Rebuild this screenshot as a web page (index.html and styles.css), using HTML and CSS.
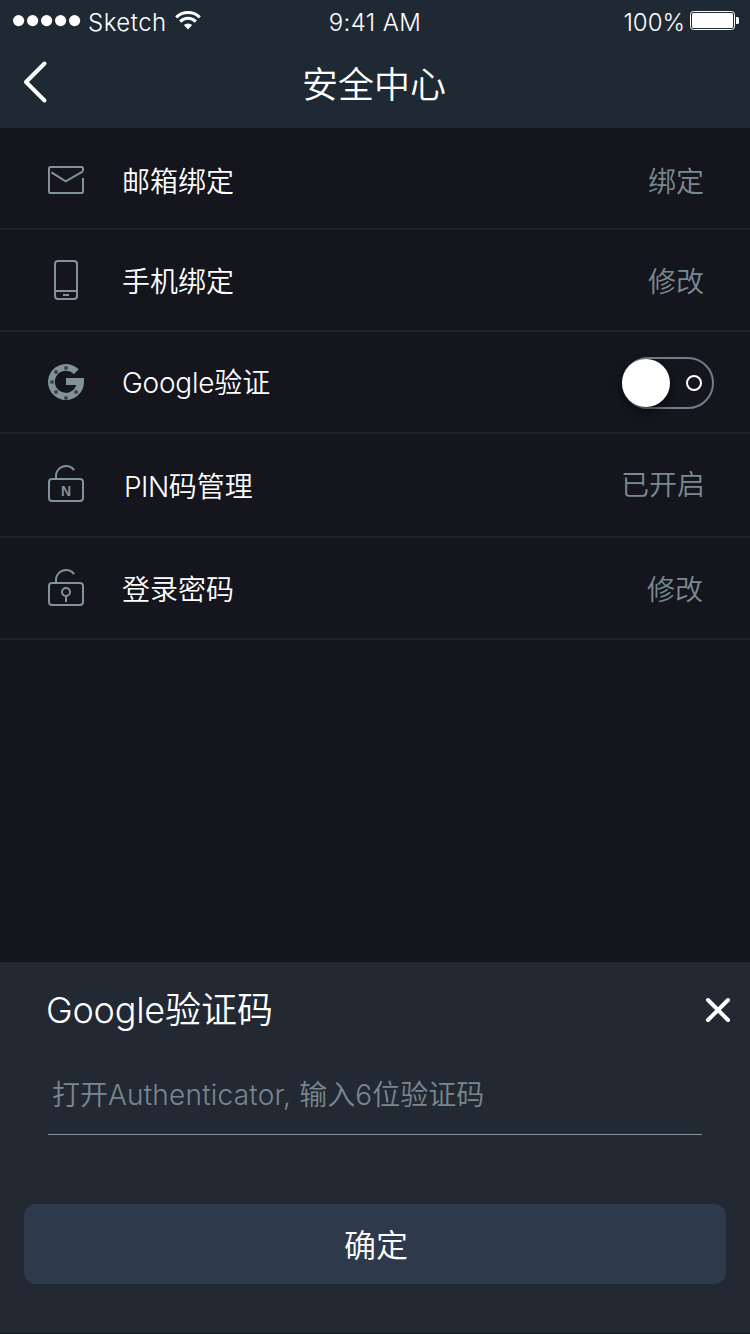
FILE: index.html
```html
<!DOCTYPE html>
<html lang="zh-CN">
<head>
<meta charset="utf-8">
<title>安全中心</title>
<link rel="stylesheet" href="styles.css">
</head>
<body>
<div class="screen">
  <header class="header">
    <div class="status">
      <div class="status-left">
        <svg class="dots" width="68" height="12" viewBox="0 0 68 12" fill="#fff"><circle cx="5.6" cy="5.600" r="5.6"/><circle cx="19.6" cy="5.600" r="5.6"/><circle cx="33.6" cy="5.600" r="5.6"/><circle cx="47.6" cy="5.600" r="5.6"/><circle cx="61.6" cy="5.600" r="5.6"/></svg>
        <span class="carrier">Sketch</span>
        <svg class="wifi" width="26" height="19" viewBox="0 0 26 19"><g fill="none" stroke="#fff" stroke-width="3"><path d="M1.2 6.4A16.8 16.8 0 0 1 24.8 6.4"/><path d="M5.2 10.6A11 11 0 0 1 20.8 10.6"/></g><path d="M8.8 14.1A6 6 0 0 1 17.2 14.1L13 18.4Z" fill="#fff"/></svg>
      </div>
      <span class="time">9:41 AM</span>
      <div class="status-right">
        <span class="percent">100%</span>
        <svg class="battery" width="50" height="20" viewBox="0 0 50 20"><rect x=".5" y=".5" width="44" height="18" rx="3" fill="none" stroke="#fff"/><rect x="2" y="2" width="41" height="15" rx="1.5" fill="#fff"/><path d="M46 6h1.5a1.5 1.5 0 0 1 1.5 1.5v4a1.5 1.5 0 0 1-1.500 1.500H46z" fill="#fff"/></svg>
      </div>
    </div>
    <nav class="navbar">
      <svg class="back" width="24" height="42" viewBox="0 0 24 42"><path d="M20.500 2.500L2 21L20.500 39.500" fill="none" stroke="#fff" stroke-width="4" stroke-linecap="round" stroke-linejoin="round"/></svg>
      <h1 class="title">安全中心</h1>
    </nav>
  </header>

  <main class="list">
    <div class="row row-email">
      <svg class="icon" width="36" height="40" viewBox="0 0 36 40"><path d="M35 11V8.500a1.500 1.500 0 0 0-1.500-1.500h-31A1.500 1.500 0 0 0 1 8.500v23A1.500 1.500 0 0 0 2.500 33h31a1.500 1.500 0 0 0 1.500-1.500V18M3.500 12.300L17.700 21.300L35 11.300"/></svg>
      <span class="label">邮箱绑定</span>
      <span class="value">绑定</span>
    </div>
    <div class="row">
      <svg class="icon icon-phone" width="36" height="40" viewBox="0 0 36 40"><rect x="7" y="1" width="22" height="38" rx="3"/><path d="M7 31H29M15 35H21"/></svg>
      <span class="label label-low">手机绑定</span>
      <span class="value value-low">修改</span>
    </div>
    <div class="row">
      <svg class="icon icon-google" width="36" height="40" viewBox="0 0 36 40"><path class="solid" d="M30.700 7.300A18 18 0 1 0 36 20V16H18V23H28.300A11 11 0 1 1 25.800 12.200Z"/><g class="hole"><circle cx="18" cy="6" r="2"/><circle cx="8" cy="10" r="2"/><circle cx="4" cy="20" r="2"/><circle cx="8" cy="30" r="2"/><circle cx="18" cy="36" r="2"/><circle cx="28" cy="30" r="2"/></g></svg>
      <span class="label"><span class="latin">Google</span>验证</span>
      <span class="switch"><span class="knob"></span><span class="off-mark"></span></span>
    </div>
    <div class="row tall">
      <svg class="icon icon-lock" width="36" height="40" viewBox="0 0 36 40"><rect x="1" y="16" width="34" height="22" rx="3"/><path d="M8 16V13A10 10 0 0 1 26.200 7.300"/><text class="key" x="18" y="33">N</text></svg>
      <span class="label label-pin"><span class="latin">PIN</span>码管理</span>
      <span class="value value-on">已开启</span>
    </div>
    <div class="row">
      <svg class="icon icon-lock" width="36" height="40" viewBox="0 0 36 40"><rect x="1" y="16" width="34" height="22" rx="3"/><path d="M8 16V13A10 10 0 0 1 26.200 7.300M18 29V35"/><circle cx="18" cy="25" r="4"/></svg>
      <span class="label label-low">登录密码</span>
      <span class="value value-low value-edit">修改</span>
    </div>
  </main>

  <section class="sheet">
    <div class="sheet-head">
      <h2 class="sheet-title"><span class="latin">Google</span>验证码</h2>
      <svg class="close" width="24" height="24" viewBox="0 0 24 24"><path d="M2 2L22 22M22 2L2 22" stroke="#fff" stroke-width="4" stroke-linecap="round"/></svg>
    </div>
    <div class="field"><span class="hint">打开<span class="latin">Authenticator, </span>输入<span class="latin">6</span>位验证码</span></div>
    <div class="confirm">确定</div>
  </section>
</div>
</body>
</html>
```
FILE: styles.css
```css
* { box-sizing: border-box; }
body { margin: 0; background: #14151d; }
.screen {
  width: 750px; height: 1334px;
  display: flex; flex-direction: column;
  overflow: hidden;
  background: #14151d;
  color: #fff;
  font-family: Inter, "Noto Sans CJK SC", sans-serif;
  font-weight: 350;
  white-space: nowrap;
}
svg { display: block; flex: none; overflow: visible; }
.latin { letter-spacing: -.25px; }

.header { height: 128px; background: #1f2934; }
.status {
  height: 40px;
  display: grid; grid-template-columns: 1fr auto 1fr;
  align-items: start;
  font-size: 24px; line-height: 30px;
}
.status-left { display: flex; padding-left: 13px; }
.dots { margin-top: 15px; }
.carrier { margin: 8px 0 0 7px; width: 78px; letter-spacing: .5px; }
.wifi { margin: 11px 0 0 9px; }
.time { margin-top: 8px; letter-spacing: .4px; }
.status-right { display: flex; justify-content: flex-end; padding-right: 10px; }
.percent { margin: 8px 5px 0 0; }
.battery { margin-top: 11px; }
.navbar { height: 88px; display: grid; grid-template-columns: 1fr auto 1fr; align-items: start; }
.back { margin: 21px 0 0 24px; }
.title { margin: 19px 0 0; padding-right: 2px; font-size: 36px; line-height: 52px; font-weight: 350; }

.list { height: 834px; }
.row {
  height: 102px;
  display: flex; align-items: flex-start;
  padding: 31px 46px 0 48px;
  border-bottom: 2px solid #1e232e;
  font-size: 28px; line-height: 40px;
}
.row.tall { height: 104px; }
.row-email { padding-top: 32px; border-color: #1a202a; }
.row-email .label, .row-email .value { margin-top: 2px; }
.icon { fill: none; stroke: #81929b; stroke-width: 2; }
.icon-phone, .icon-google { margin-top: -1px; }
.icon-lock { margin-top: -2px; }
.solid { fill: #81929b; stroke: none; }
.hole { fill: #3b4750; stroke: none; }
.key { fill: #81929b; stroke: none; font: 700 14px "Liberation Sans", sans-serif; text-anchor: middle; }
.label { margin-left: 38px; flex: 1; }
.label-low, .value-low { margin-top: 1px; }
.label-pin { padding: 2px 0 0 2px; }
.label-pin .latin { letter-spacing: -.5px; }
.value { color: #7b8992; }
.value-on { margin: 0 -1px 0 0; }
.value-edit { margin-right: 1px; }

.switch {
  width: 92px; height: 52px;
  margin: -6px -10px 0 0;
  display: flex; align-items: center; justify-content: space-between;
  padding: 0 10px 0 0;
  border: 2px solid #6f7e87;
  border-radius: 26px;
}
.knob { width: 48px; height: 48px; margin-left: -2px; border-radius: 50%; background: #fff; box-shadow: 0 4px 8px rgba(0,0,0,.5); }
.off-mark { width: 16px; height: 16px; border: 2px solid #fff; border-radius: 50%; }

.sheet { height: 371px; background: #222933; padding: 0 24px; }
.sheet-head { display: flex; justify-content: space-between; height: 98px; margin-right: -4px; padding: 22px 0 0 22px; }
.sheet-title { margin: 0; font-size: 36px; line-height: 52px; font-weight: 350; }
.close { margin-top: 14px; }
.field { height: 75px; margin: 0 24px; padding: 15px 0 0 4px; border-bottom: 1px solid #81929b; font-size: 28px; line-height: 40px; color: #788790; }
.field .latin { letter-spacing: .22px; }
.confirm { height: 80px; margin-top: 69px; padding: 2px 0 0 2px; border-radius: 12px; background: #2e394b; font-size: 32px; line-height: 80px; text-align: center; }
```
